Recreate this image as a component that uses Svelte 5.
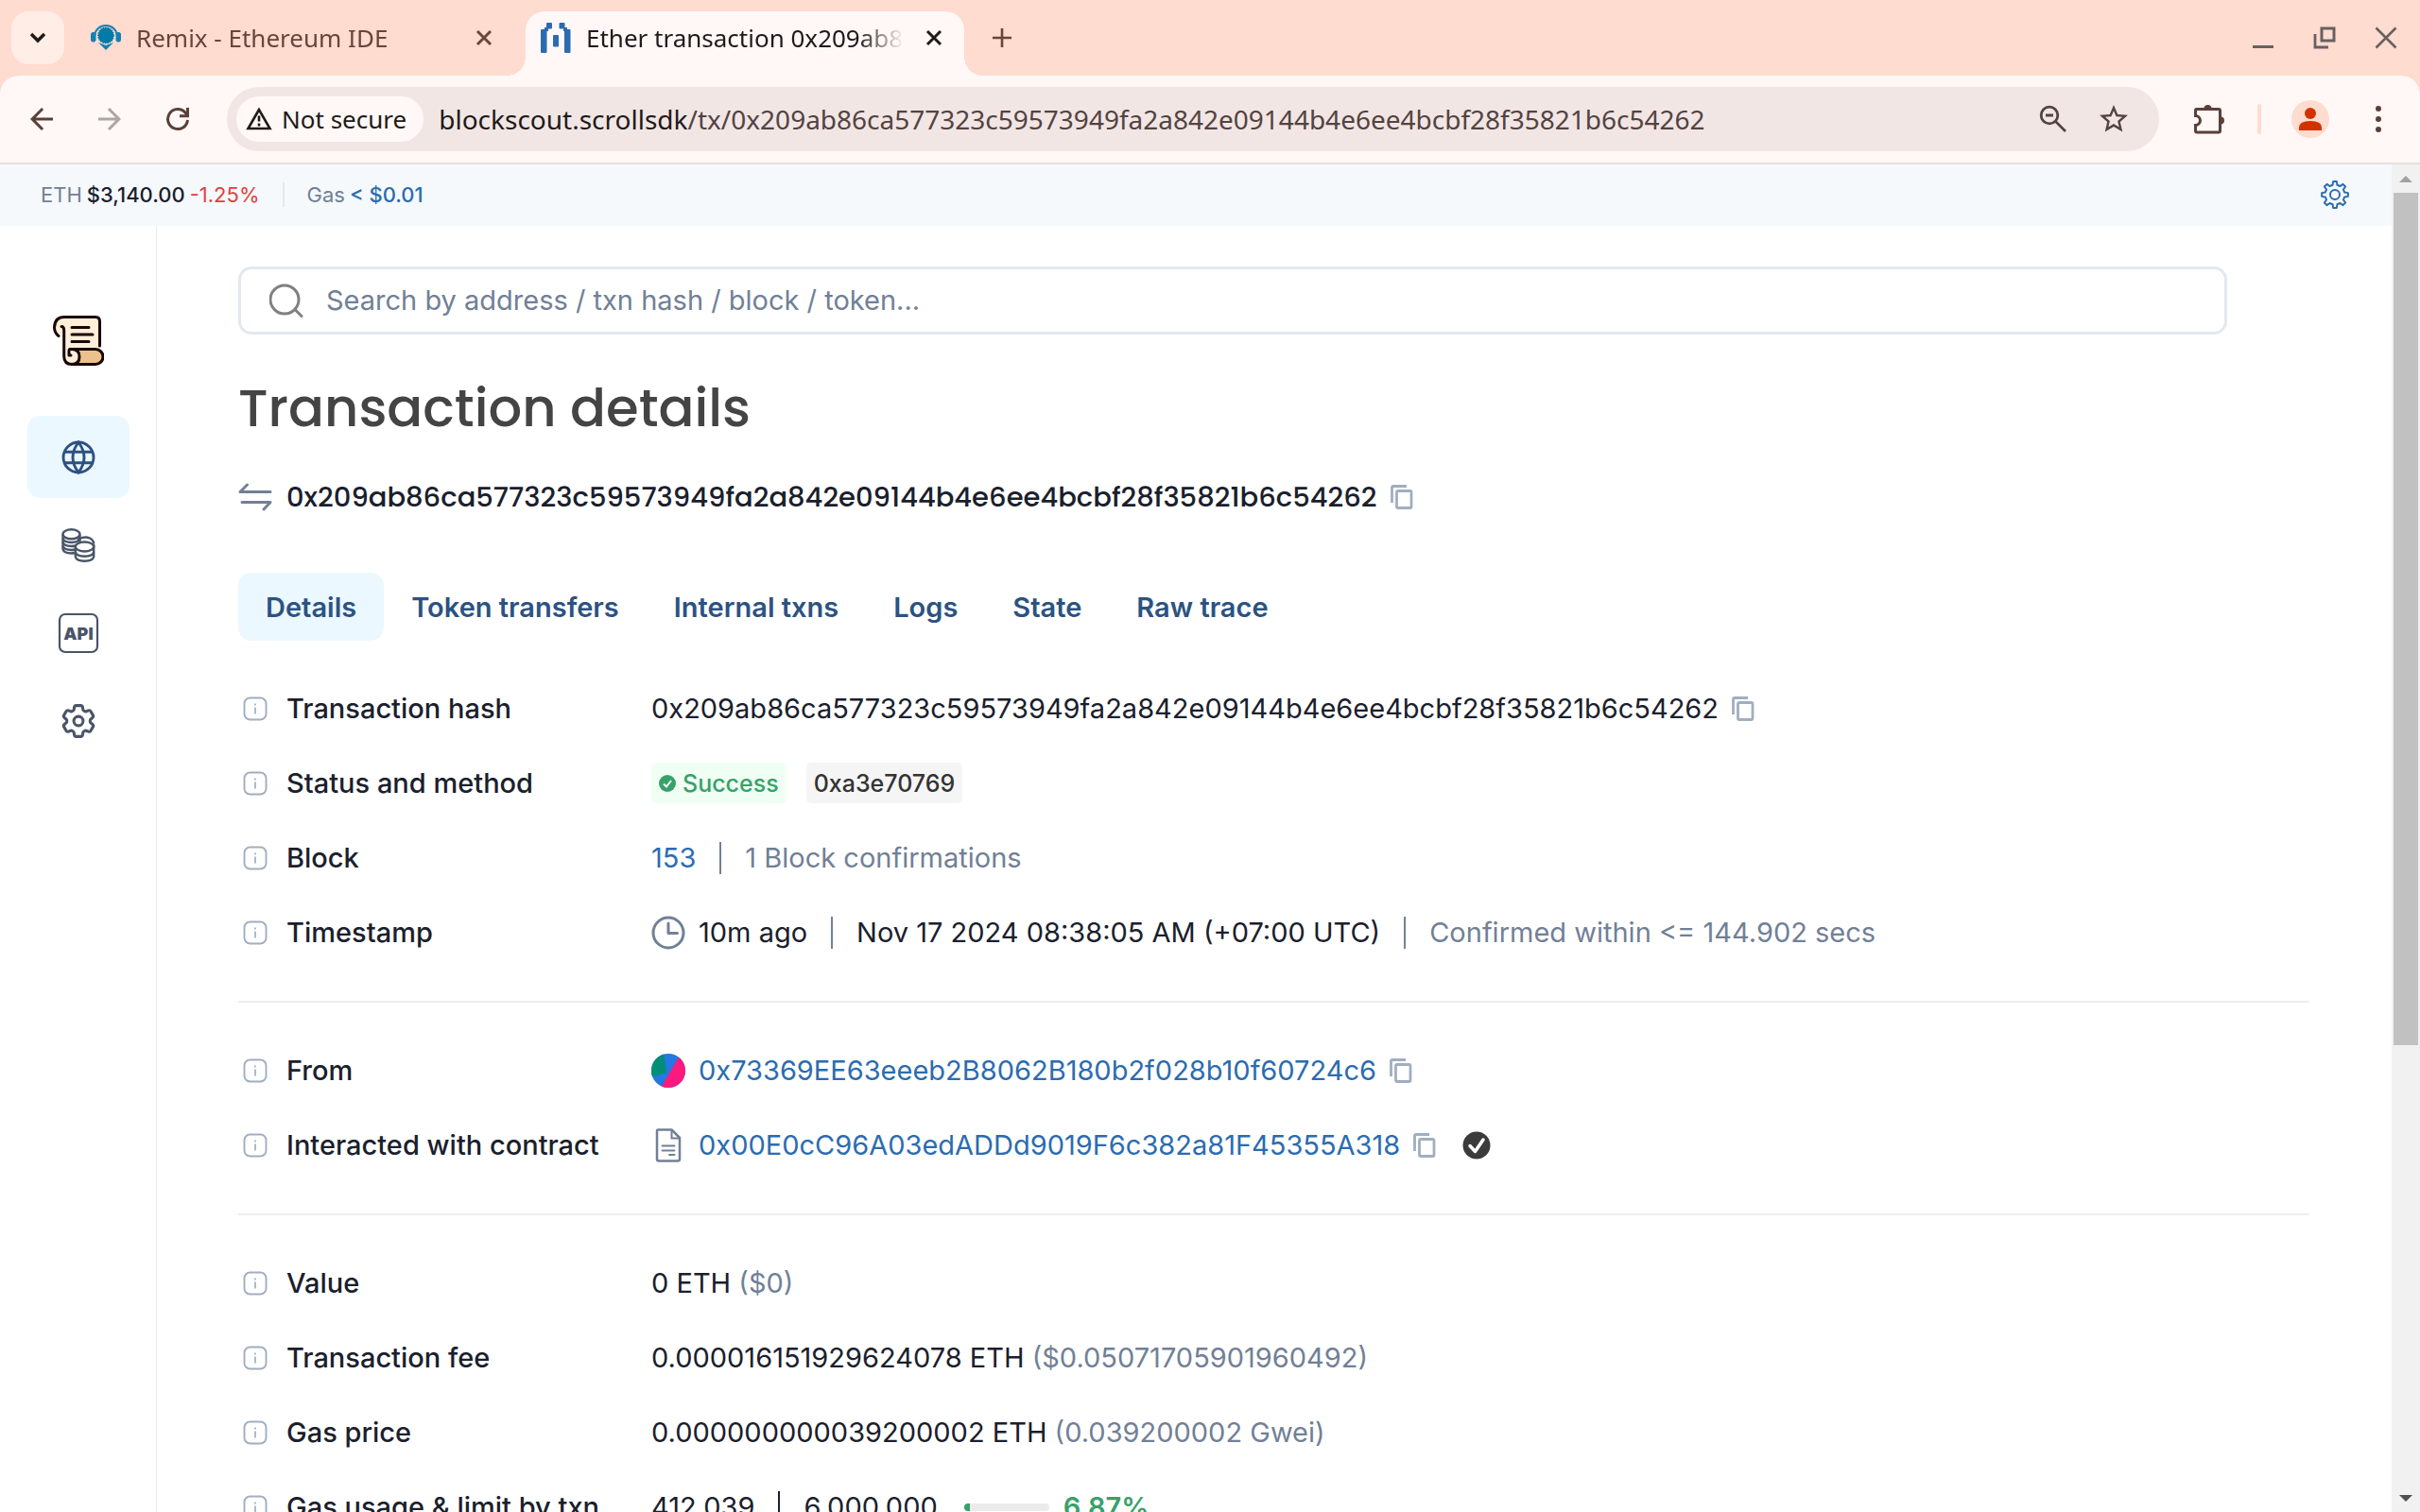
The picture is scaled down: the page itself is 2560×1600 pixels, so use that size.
<script lang="ts">
	const txHash = '0x209ab86ca577323c59573949fa2a842e09144b4e6ee4bcbf28f35821b6c54262';
	const tabs = ['Details', 'Token transfers', 'Internal txns', 'Logs', 'State', 'Raw trace'];
	const gasUsed = 6.87;

	let activeTab = $state('Details');
	let search = $state('');

	function gearPath(teeth: number, inner: number, outer: number) {
		const step = (Math.PI * 2) / teeth;
		const points: string[] = [];
		for (let i = 0; i < teeth; i++) {
			const a = i * step - Math.PI / 2;
			const corners = [
				[inner, -0.3],
				[outer, -0.17],
				[outer, 0.17],
				[inner, 0.3]
			];
			for (const [r, k] of corners) {
				points.push(`${16 + r * Math.cos(a + k * step)} ${16 + r * Math.sin(a + k * step)}`);
			}
		}
		return `M${points.join('L')}Z`;
	}
</script>

<svelte:head>
	<title>Ether transaction {txHash}</title>
</svelte:head>

{#snippet close()}
	<svg width="20" height="20" viewBox="0 0 20 20">
		<path d="M3 3l14 14M17 3L3 17" stroke="currentColor" stroke-width="3" />
	</svg>
{/snippet}

{#snippet copy(label: string)}
	<button class="copy" aria-label={label}>
		<svg width="24" height="26" viewBox="0 0 24 26" fill="none" stroke="currentColor">
			<path d="M1.500 19V3q0-1.500 1.500-1.500H17" stroke-width="2.800" />
			<rect x="6.500" y="6.500" width="15.500" height="18" rx="1.500" stroke-width="2.800" />
		</svg>
	</button>
{/snippet}

{#snippet label(text: string)}
	<dt>
		<svg width="26" height="26" viewBox="0 0 26 26" fill="none" stroke="#a0aec0">
			<rect x="1.500" y="1.500" width="23" height="23" rx="6" stroke-width="1.900" />
			<path d="M13 11.500v7M13 7.500v2" stroke-width="1.700" />
		</svg>
		{text}
	</dt>
{/snippet}

<div class="window">
	<header class="tab-strip">
		<button class="tab-search" aria-label="Search tabs">
			<svg width="20" height="14" viewBox="0 0 20 14">
				<path d="M3 3l7 7 7-7" fill="none" stroke="#201a18" stroke-width="3.500" />
			</svg>
		</button>
		<div class="browser-tab">
			<svg width="32" height="32" viewBox="0 0 32 32">
				<path d="M4.500 13a11.500 10 0 0 1 23 0" fill="none" stroke="#1480b2" stroke-width="2" />
				<rect x="0" y="10" width="5.500" height="10.500" rx="2.700" fill="#1480b2" />
				<rect x="26.500" y="10" width="5.500" height="10.500" rx="2.700" fill="#1480b2" />
				<circle
					cx="16"
					cy="13.500"
					r="8.200"
					fill="#037ba8"
					stroke="#037ba8"
					stroke-width="1.500"
					stroke-dasharray="1.500 1"
				/>
				<path d="M8 21l8 3 8-3-8 8z" fill="#1480b2" />
			</svg>
			<span class="tab-title">Remix - Ethereum IDE</span>
			<button class="tab-close" aria-label="Close tab">{@render close()}</button>
		</div>
		<div class="browser-tab current">
			<svg width="32" height="32" viewBox="0 0 32 32" fill="#2b6cb0">
				<rect y="7" width="6.500" height="25" rx="1" />
				<rect x="6" width="6" height="6.500" rx="1" />
				<rect x="4" y="5" width="4" height="4" />
				<rect x="13" y="13" width="6" height="12.500" rx="1" />
				<rect x="19.500" width="6" height="6.500" rx="1" />
				<rect x="24" y="5" width="4" height="4" />
				<rect x="25" y="7" width="6.500" height="25" rx="1" />
			</svg>
			<span class="tab-title">Ether transaction {txHash}</span>
			<button class="tab-close" aria-label="Close tab">{@render close()}</button>
		</div>
		<button class="new-tab" aria-label="New tab">
			<svg width="22" height="22" viewBox="0 0 22 22">
				<path d="M11 1v20M1 11h20" stroke="currentColor" stroke-width="2.600" />
			</svg>
		</button>
		<div class="window-controls">
			<button aria-label="Minimize">
				<svg width="24" height="24" viewBox="0 0 24 24">
					<path d="M1 21.500h22" stroke="currentColor" stroke-width="3" />
				</svg>
			</button>
			<button aria-label="Restore">
				<svg width="24" height="24" viewBox="0 0 24 24" fill="none" stroke="currentColor">
					<rect x="9" y="2" width="13" height="13" stroke-width="3" />
					<path d="M2 8v14h14" stroke-width="2.800" />
				</svg>
			</button>
			<button aria-label="Close">
				<svg width="24" height="24" viewBox="0 0 24 24">
					<path d="M1.500 1.500l21 21M22.500 1.500l-21 21" stroke="currentColor" stroke-width="2.600" />
				</svg>
			</button>
		</div>
	</header>

	<div class="toolbar">
		<button aria-label="Back">
			<svg width="36" height="36" viewBox="0 0 24 24" fill="currentColor">
				<path d="M20 11H7.830l5.590-5.590L12 4l-8 8 8 8 1.410-1.410L7.830 13H20z" />
			</svg>
		</button>
		<button class="faded" aria-label="Forward">
			<svg width="36" height="36" viewBox="0 0 24 24" fill="currentColor">
				<path d="M4 11h12.170l-5.590-5.590L12 4l8 8-8 8-1.410-1.410L16.170 13H4z" />
			</svg>
		</button>
		<button aria-label="Reload">
			<svg width="26" height="26" viewBox="0 0 26 26" fill="none" stroke="currentColor">
				<path d="M23.500 14A10.500 10.500 0 1 1 21 6.200L23 9" stroke-width="3" />
				<path d="M23.500 1v8.700H15" stroke-width="3" />
			</svg>
		</button>
		<div class="omnibox">
			<button class="security">
				<svg width="28" height="26" viewBox="0 0 28 26" fill="none" stroke="#201a18">
					<path d="M14 3L2.500 23h23z" stroke-width="2.600" />
					<path d="M14 9.500v6M14 17.500v3" stroke-width="2.600" />
				</svg>
				Not secure
			</button>
			<div class="url" role="textbox" aria-label="Address" aria-readonly="true" tabindex="0">
				<span>blockscout.scrollsdk</span>/tx/{txHash}
			</div>
			<button aria-label="Zoom">
				<svg width="30" height="30" viewBox="0 0 30 30" fill="none" stroke="currentColor">
					<circle cx="11" cy="11" r="8.800" stroke-width="2.800" />
					<path d="M7 11h8M17.500 17.500L28 28" stroke-width="2.800" />
				</svg>
			</button>
			<button aria-label="Bookmark this tab">
				<svg width="36" height="36" viewBox="0 0 24 24" fill="currentColor">
					<path
						d="M22 9.240l-7.190-.620L12 2 9.190 8.630 2 9.240l5.460 4.730L5.820 21 12 17.270 18.180 21l-1.630-7.030zM12 15.400l-3.760 2.270 1-4.280-3.320-2.880 4.380-.380L12 6.100l1.710 4.040 4.380.380-3.320 2.880 1 4.280z"
					/>
				</svg>
			</button>
		</div>
		<button class="extensions" aria-label="Extensions">
			<svg width="34" height="34" viewBox="0 0 34 34">
				<path
					d="M3.500 6.500h23.500q1.500 0 1.500 1.500v21.500q0 1.500-1.500 1.500H4q-1.500 0-1.500-1.500V23.500a5 5 0 0 0 0-10V8q0-1.500 1-1.500z"
					fill="none"
					stroke="currentColor"
					stroke-width="3"
				/>
				<path d="M11.500 6a4 4 0 0 1 8 0zM29 14.500a4 4 0 0 1 0 8z" fill="currentColor" />
			</svg>
		</button>
		<span class="toolbar-divider"></span>
		<button aria-label="Profile">
			<svg width="40" height="40" viewBox="0 0 40 40">
				<circle cx="20" cy="20" r="20" fill="#ffdbd0" />
				<circle cx="20" cy="14" r="6" fill="#d03300" />
				<path d="M8 32v-3q0-7 12-7t12 7v3z" fill="#d03300" />
			</svg>
		</button>
		<button aria-label="Menu">
			<svg width="8" height="30" viewBox="0 0 8 30" fill="currentColor">
				<circle cx="4" cy="4" r="3" />
				<circle cx="4" cy="15" r="3" />
				<circle cx="4" cy="26" r="3" />
			</svg>
		</button>
	</div>

	<div class="viewport">
		<div class="page">
			<div class="stats">
				<span class="muted">ETH</span>
				<span class="price">$3,140.00</span>
				<span class="change">-1.25%</span>
				<span class="stats-divider"></span>
				<span class="muted">Gas</span>
				<a href="#gas">&lt; $0.01</a>
				<button class="settings" aria-label="Settings">
					<svg width="32" height="32" viewBox="0 0 32 32" fill="none" stroke="currentColor">
						<path d={gearPath(8, 10.5, 14)} stroke-width="2" stroke-linejoin="round" />
						<circle cx="16" cy="16" r="5" stroke-width="2" />
					</svg>
				</button>
			</div>

			<div class="body">
				<nav class="sidebar" aria-label="Main">
					<a class="logo" href="#home" aria-label="Home">
						<svg width="54" height="54" viewBox="0 0 54 54" stroke-linecap="round" stroke-linejoin="round">
							<path
								d="M9 1.500H45q4.500 0 4.500 4.500V36L20 51.500q-8.500 0-8.500-8.500V15L6 21Q1.500 18 1.500 12 1.500 4 9 1.500z"
								fill="#ffeeda"
							/>
							<path d="M20 35.500H45a8 8 0 0 1 0 16H20q8-1 8-8t-8-8z" fill="#ebc28e" />
							<g fill="none" stroke="#190602" stroke-width="3">
								<path d="M6 21.500Q1.500 18 1.500 12.500 2 1.500 12 1.500H45q4.500 0 4.500 4.500V32" />
								<path d="M9 11.500q2.700 0 2.700 4V43q0 8.500 8.500 8.500H45a8 8 0 0 0 0-16H18q-1 0-1 2v4.500h2" />
								<path d="M20 35.500q8 0 8 8t-8 8" />
								<path d="M20 12.500H38M20 20H42M20 27.500H38" />
							</g>
						</svg>
					</a>
					<a class="nav-item selected" href="#blockchain" aria-label="Blockchain">
						<svg width="36" height="36" viewBox="0 0 36 36" fill="none" stroke="currentColor" stroke-width="2.900">
							<circle cx="18" cy="18" r="16" />
							<path d="M18 2q-12 16 0 32q12-16 0-32zM3.500 12.200h29M3.500 23.800h29" />
						</svg>
					</a>
					<a class="nav-item" href="#tokens" aria-label="Tokens">
						<svg width="36" height="36" viewBox="0 0 36 36" fill="none" stroke="currentColor" stroke-width="2.400">
							<ellipse cx="10.500" cy="6.300" rx="9" ry="5" />
							<path d="M1.500 6.500V22q1 4.500 9 4.500 2 0 3.500-.500M19.500 6.500V15" />
							<path d="M1.500 10.500q1 4.500 9 4.500t9-4.500M1.500 14.500q1 4.500 9 4.500 2.500 0 4-.500M1.500 18.500q1 4.500 9 4.500 2 0 3.500-.500" />
							<ellipse cx="24.500" cy="19.500" rx="9.700" ry="5" />
							<path d="M17 12q7-4 13-1.500 4 2 4.300 6" />
							<path d="M14.800 19.500V30q1 4.700 9.700 4.700T34.200 30V17" />
							<path d="M14.800 25q1 4.700 9.700 4.700T34.200 25" />
						</svg>
					</a>
					<a class="nav-item" href="#api" aria-label="API">
						<svg width="44" height="44" viewBox="0 0 44 44">
							<rect x="2" y="2" width="40" height="40" rx="6" fill="none" stroke="currentColor" stroke-width="2.200" />
							<text x="22" y="29" text-anchor="middle" class="api">API</text>
						</svg>
					</a>
					<a class="nav-item" href="#other" aria-label="Other">
						<svg width="40" height="40" viewBox="1 1 22 22" fill="none" stroke="currentColor" stroke-width="1.700">
							<path
								d="M9.594 3.940c.090-.542.560-.940 1.110-.940h2.593c.550 0 1.020.398 1.110.940l.213 1.281c.063.374.313.686.645.870.074.040.147.083.220.127.325.196.720.257 1.075.124l1.217-.456a1.125 1.125 0 0 1 1.370.490l1.296 2.247a1.125 1.125 0 0 1-.260 1.431l-1.003.827c-.293.241-.438.613-.430.992a7.723 7.723 0 0 1 0 .255c-.008.378.137.750.430.991l1.004.827c.424.350.534.955.260 1.430l-1.298 2.247a1.125 1.125 0 0 1-1.369.491l-1.217-.456c-.355-.133-.750-.072-1.076.124a6.470 6.470 0 0 1-.220.128c-.331.183-.581.495-.644.869l-.213 1.281c-.090.543-.560.940-1.110.940h-2.594c-.550 0-1.019-.398-1.110-.940l-.213-1.281c-.062-.374-.312-.686-.644-.870a6.520 6.520 0 0 1-.220-.127c-.325-.196-.720-.257-1.076-.124l-1.217.456a1.125 1.125 0 0 1-1.369-.490l-1.297-2.247a1.125 1.125 0 0 1 .260-1.431l1.004-.827c.292-.240.437-.613.430-.991a6.932 6.932 0 0 1 0-.255c.007-.380-.138-.751-.430-.992l-1.004-.827a1.125 1.125 0 0 1-.260-1.430l1.297-2.247a1.125 1.125 0 0 1 1.370-.491l1.216.456c.356.133.751.072 1.076-.124.072-.044.146-.086.220-.128.332-.183.582-.495.644-.869l.214-1.280Z"
							/>
							<circle cx="12" cy="12" r="2.700" />
						</svg>
					</a>
				</nav>

				<main>
					<form class="search" role="search">
						<svg width="36" height="36" viewBox="0 0 36 36" fill="none" stroke="#808080" stroke-width="3">
							<circle cx="16" cy="17" r="15" />
							<path d="M27 27.500l7 7" stroke-linecap="round" />
						</svg>
						<input
							type="text"
							aria-label="Search"
							placeholder="Search by address / txn hash / block / token..."
							bind:value={search}
						/>
					</form>

					<h1>Transaction details</h1>

					<div class="hash">
						<svg width="36" height="30" viewBox="0 0 36 30" fill="none" stroke="#718096" stroke-width="3" stroke-linecap="round" stroke-linejoin="round">
							<path d="M34 9.500H2L9.500 2M4 20.500H34L27 28" />
						</svg>
						<span>{txHash}</span>
						{@render copy('Copy hash')}
					</div>

					<div class="tabs" role="tablist">
						{#each tabs as tab}
							<button
								role="tab"
								aria-selected={tab === activeTab}
								class:active={tab === activeTab}
								onclick={() => (activeTab = tab)}>{tab}</button
							>
						{/each}
					</div>

					<dl>
						<div class="row">
							{@render label('Transaction hash')}
							<dd><span>{txHash}</span>{@render copy('Copy transaction hash')}</dd>
						</div>
						<div class="row">
							{@render label('Status and method')}
							<dd>
								<span class="tag success">
									<svg width="18" height="18" viewBox="0 0 18 18">
										<circle cx="9" cy="9" r="9" fill="#38a169" />
										<path d="M5 9.500l3 3 5-6.500" fill="none" stroke="#f0fff4" stroke-width="2" />
									</svg>
									Success
								</span>
								<span class="tag method">0xa3e70769</span>
							</dd>
						</div>
						<div class="row">
							{@render label('Block')}
							<dd>
								<a href="#block">153</a>
								<span class="separator"></span>
								<span class="muted">1 Block confirmations</span>
							</dd>
						</div>
						<div class="row">
							{@render label('Timestamp')}
							<dd>
								<svg class="lead" width="36" height="36" viewBox="0 0 36 36" fill="none" stroke="#718096" stroke-width="3">
									<circle cx="18" cy="18" r="16" />
									<path d="M18 8v10.500h9.500" stroke-linecap="round" stroke-linejoin="round" />
								</svg>
								<span>10m ago</span>
								<span class="separator"></span>
								<span>Nov 17 2024 08:38:05 AM (+07:00 UTC)</span>
								<span class="separator"></span>
								<span class="muted">Confirmed within &lt;= 144.902 secs</span>
							</dd>
						</div>
					</dl>

					<dl>
						<div class="row">
							{@render label('From')}
							<dd>
								<svg class="lead" width="36" height="36" viewBox="0 0 36 36">
									<clipPath id="avatar"><circle cx="18" cy="18" r="18" /></clipPath>
									<g clip-path="url(#avatar)">
										<path d="M0 0h36v36H0z" fill="#2378e1" />
										<path d="M0 0h13l3 20-13 4H0z" fill="#018e77" />
										<path d="M30 2L10 36h26V2z" fill="#fc1a7e" />
									</g>
								</svg>
								<a href="#from">0x73369EE63eeeb2B8062B180b2f028b10f60724c6</a>
								{@render copy('Copy sender address')}
							</dd>
						</div>
						<div class="row">
							{@render label('Interacted with contract')}
							<dd>
								<svg class="lead" width="36" height="36" viewBox="0 0 36 36" fill="none" stroke="#718096" stroke-width="2.500">
									<path d="M7 1.500H21.500L30 10v22.500q0 2-2 2H8q-2 0-2-2V3q0-1.500 1-1.500z" stroke-linejoin="round" />
									<path d="M21.500 2v8.500H30" stroke-width="2" />
									<path d="M11.500 18.500h13M11.500 23.500h13M19 28h5.500" stroke-width="2" stroke-linecap="round" />
								</svg>
								<a href="#contract">0x00E0cC96A03edADDd9019F6c382a81F45355A318</a>
								{@render copy('Copy contract address')}
								<svg class="verified" width="30" height="30" viewBox="0 0 30 30">
									<circle cx="15" cy="15" r="14.500" fill="#3b3b3b" />
									<path d="M8 15.500l5.500 6L22 9" fill="none" stroke="#fff" stroke-width="3.500" stroke-linecap="round" stroke-linejoin="round" />
								</svg>
							</dd>
						</div>
					</dl>

					<dl>
						<div class="row">
							{@render label('Value')}
							<dd><span>0 ETH <span class="muted">($0)</span></span></dd>
						</div>
						<div class="row">
							{@render label('Transaction fee')}
							<dd>
								<span>0.000016151929624078 ETH <span class="muted">($0.05071705901960492)</span></span>
							</dd>
						</div>
						<div class="row">
							{@render label('Gas price')}
							<dd>
								<span>0.000000000039200002 ETH <span class="muted">(0.039200002 Gwei)</span></span>
							</dd>
						</div>
						<div class="row">
							{@render label('Gas usage & limit by txn')}
							<dd>
								<span>412,039</span>
								<span class="separator dark"></span>
								<span>6,000,000</span>
								<span class="usage"><span style="width: {gasUsed}%"></span></span>
								<strong>{gasUsed}%</strong>
							</dd>
						</div>
					</dl>
				</main>
			</div>
		</div>

		<div class="scrollbar" aria-hidden="true">
			<svg width="30" height="30" viewBox="0 0 30 30"><path d="M8 19l7-7 7 7z" fill="#a3a3a3" /></svg>
			<div class="track"><div class="thumb"></div></div>
			<svg width="30" height="30" viewBox="0 0 30 30"><path d="M8 12l7 7 7-7z" fill="#505050" /></svg>
		</div>
	</div>
</div>

<style>
	:global(body) {
		overflow: hidden;
	}

	.window {
		display: flex;
		flex-direction: column;
		height: 100vh;
		background: #ffdbd0;
		font-family: 'Noto Sans', sans-serif;
		font-size: 26px;
		color: #201a18;
	}

	button {
		display: flex;
		align-items: center;
		justify-content: center;
		padding: 0;
		border: 0;
		background: none;
		font: inherit;
		color: inherit;
		cursor: pointer;
	}

	svg {
		flex: none;
	}

	a {
		color: #2b6cb0;
		text-decoration: none;
	}

	/* browser frame */
	.tab-strip {
		display: flex;
		flex: none;
		gap: 12px;
		height: 68px;
		padding: 12px 4px 0 12px;
	}

	.tab-search {
		width: 56px;
		height: 56px;
		border-radius: 18px;
		background: #ffede6;
	}

	.browser-tab {
		position: relative;
		display: flex;
		flex: 0 1 464px;
		box-sizing: border-box;
		gap: 16px;
		min-width: 0;
		height: 56px;
		padding: 0 16px;
		align-items: center;
		color: #69453a;
	}

	.current {
		height: 68px;
		padding-bottom: 12px;
		border-radius: 20px 20px 0 0;
		background: #fff8f6;
		color: #201a18;
	}

	.current::before,
	.current::after {
		content: '';
		position: absolute;
		bottom: 0;
		width: 20px;
		height: 20px;
	}

	.current::before {
		right: 100%;
		background: radial-gradient(circle at 0 0, transparent 20px, #fff8f6 20px);
	}

	.current::after {
		left: 100%;
		background: radial-gradient(circle at 100% 0, transparent 20px, #fff8f6 20px);
	}

	.tab-title {
		flex: 1;
		min-width: 0;
		overflow: hidden;
		white-space: nowrap;
		mask-image: linear-gradient(to left, transparent, #000 48px);
	}

	.tab-close {
		width: 32px;
		height: 32px;
	}

	.new-tab {
		width: 56px;
		height: 56px;
		color: #69453a;
	}

	.window-controls {
		display: flex;
		height: 56px;
		margin-left: auto;
		color: #66615f;
	}

	.window-controls button {
		width: 65px;
	}

	.toolbar {
		display: flex;
		flex: none;
		align-items: center;
		height: 92px;
		padding: 0 8px;
		border-bottom: 2px solid #e8dfdd;
		border-radius: 20px 20px 0 0;
		background: #fff8f6;
		color: #5b4039;
	}

	.toolbar > button {
		width: 72px;
		height: 68px;
	}

	.toolbar > .faded {
		color: #aea6a4;
	}

	.omnibox {
		display: flex;
		flex: 1;
		align-items: center;
		height: 68px;
		margin: 0 17px 0 16px;
		padding: 0 16px 0 10px;
		border-radius: 34px;
		background: #f2e6e5;
		font-size: 28px;
		color: #534341;
	}

	.omnibox > button {
		width: 64px;
		height: 48px;
	}

	.omnibox > .security {
		width: auto;
		gap: 10px;
		padding: 0 18px 0 10px;
		border-radius: 24px;
		background: #fff8f6;
		font-size: 26px;
		color: #201a18;
	}

	.url {
		flex: 1;
		margin-left: 16px;
		line-height: 36px;
		outline: none;
	}

	.url span {
		color: #201a18;
	}

	.toolbar-divider {
		width: 4px;
		height: 32px;
		margin: 0 16px 0 15px;
		border-radius: 2px;
		background: #ffdbd0;
	}

	/* page */
	.viewport {
		display: flex;
		flex: 1;
		min-height: 0;
		overflow: hidden;
		background: #fff;
		font-family: Inter, sans-serif;
		font-size: 29px;
		color: #1a202c;
	}

	.page {
		flex: 1;
		min-width: 0;
	}

	.muted {
		color: #718096;
	}

	.stats {
		display: flex;
		align-items: center;
		gap: 5px;
		box-sizing: border-box;
		height: 65px;
		padding: 0 44px 2px 43px;
		background: #f5f9fc;
		font-size: 22px;
	}

	.price,
	.stats a {
		font-weight: 500;
	}

	.change {
		color: #e53e3e;
	}

	.stats-divider {
		width: 2px;
		height: 26px;
		margin: 0 19px;
		background: #e2e8f0;
	}

	.settings {
		margin-left: auto;
		color: #2b6cb0;
	}

	.body {
		display: flex;
	}

	.sidebar {
		display: flex;
		flex: none;
		flex-direction: column;
		align-items: center;
		gap: 6px;
		width: 165px;
		padding-top: 95px;
		border-right: 1px solid #ebebeb;
	}

	.logo {
		display: flex;
		margin-bottom: 46px;
	}

	.nav-item {
		display: flex;
		align-items: center;
		justify-content: center;
		width: 108px;
		height: 87px;
		border-radius: 14px;
		color: #4a5568;
	}

	.selected {
		background: #ebf8ff;
		color: #2c5282;
	}

	.api {
		fill: currentColor;
		font-size: 18px;
		font-weight: 900;
	}

	main {
		flex: 1;
		min-width: 0;
		padding: 43px 87px 0 86px;
	}

	.search {
		display: flex;
		align-items: center;
		gap: 24px;
		box-sizing: border-box;
		height: 72px;
		margin-right: 87px;
		padding: 0 30px;
		border: 3px solid #e2e8f0;
		border-radius: 14px;
	}

	.search input {
		flex: 1;
		padding: 0 0 2px;
		border: 0;
		outline: none;
		background: none;
		font: inherit;
		color: inherit;
	}

	.search input::placeholder {
		color: #718096;
		opacity: 1;
	}

	h1 {
		margin: 42px 0 0;
		font-family: Poppins, Inter, sans-serif;
		font-size: 56px;
		font-weight: 500;
		line-height: 72px;
		color: #444;
	}

	.hash {
		display: flex;
		align-items: center;
		height: 40px;
		margin-top: 38px;
		font-family: Poppins, Inter, sans-serif;
		font-weight: 500;
	}

	.hash > span {
		margin-left: 15px;
	}

	.copy {
		margin-left: 14px;
		color: #a0aec0;
	}

	.tabs {
		display: flex;
		margin: 60px 0 46px;
	}

	.tabs button {
		height: 72px;
		padding: 0 29px;
		border-radius: 14px;
		font-weight: 600;
		color: #2c5282;
	}

	.tabs .active {
		background: #ebf8ff;
	}

	dl {
		display: grid;
		gap: 28px;
		margin: 0;
	}

	dl + dl {
		margin-top: 47px;
		padding-top: 46px;
		border-top: 2px solid #eee;
	}

	.row {
		display: grid;
		grid-template-columns: 437px 1fr;
		height: 51px;
	}

	dt,
	dd {
		display: flex;
		align-items: center;
		margin: 0;
		white-space: nowrap;
	}

	dt {
		gap: 20px;
		padding-left: 5px;
		font-weight: 500;
	}

	.lead {
		margin-right: 14px;
	}

	.tag {
		display: flex;
		align-items: center;
		gap: 7px;
		height: 43px;
		padding: 0 8px;
		border-radius: 5px;
		font-size: 25px;
		font-weight: 500;
	}

	.success {
		margin-right: 21px;
		background: #f0fff4;
		color: #38a169;
	}

	.method {
		background: #f5f5f5;
		color: #333;
	}

	.separator {
		width: 2px;
		height: 34px;
		margin: 0 25px;
		background: #718096;
	}

	.dark {
		background: #1a202c;
	}

	.verified {
		margin-left: 28px;
	}

	.usage {
		width: 90px;
		height: 8px;
		margin: 0 15px 0 28px;
		overflow: hidden;
		border-radius: 4px;
		background: #ebebeb;
	}

	.usage span {
		display: block;
		height: 100%;
		background: #38a169;
	}

	strong {
		font-weight: 600;
		color: #38a169;
	}

	.scrollbar {
		display: flex;
		flex: none;
		flex-direction: column;
		width: 30px;
		background: #f1f1f1;
	}

	.track {
		flex: 1;
		padding: 0 2px;
	}

	.thumb {
		height: 66%;
		background: #c1c1c1;
	}
</style>
